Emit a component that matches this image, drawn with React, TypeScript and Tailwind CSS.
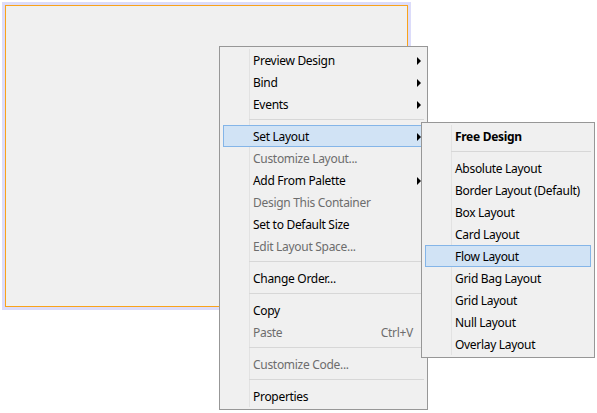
import React from 'react'

type Item =
  | { kind: 'sep' }
  | { kind: 'item'; label: string; disabled?: boolean; sub?: boolean; active?: boolean; bold?: boolean; shortcut?: string }

const mainItems: Item[] = [
  { kind: 'item', label: 'Preview Design', sub: true },
  { kind: 'item', label: 'Bind', sub: true },
  { kind: 'item', label: 'Events', sub: true },
  { kind: 'sep' },
  { kind: 'item', label: 'Set Layout', sub: true, active: true },
  { kind: 'item', label: 'Customize Layout...', disabled: true },
  { kind: 'item', label: 'Add From Palette', sub: true },
  { kind: 'item', label: 'Design This Container', disabled: true },
  { kind: 'item', label: 'Set to Default Size' },
  { kind: 'item', label: 'Edit Layout Space...', disabled: true },
  { kind: 'sep' },
  { kind: 'item', label: 'Change Order...' },
  { kind: 'sep' },
  { kind: 'item', label: 'Copy' },
  { kind: 'item', label: 'Paste', disabled: true, shortcut: 'Ctrl+V' },
  { kind: 'sep' },
  { kind: 'item', label: 'Customize Code...', disabled: true },
  { kind: 'sep' },
  { kind: 'item', label: 'Properties' },
]

const layoutItems: Item[] = [
  { kind: 'item', label: 'Free Design', bold: true },
  { kind: 'sep' },
  { kind: 'item', label: 'Absolute Layout' },
  { kind: 'item', label: 'Border Layout (Default)' },
  { kind: 'item', label: 'Box Layout' },
  { kind: 'item', label: 'Card Layout' },
  { kind: 'item', label: 'Flow Layout', active: true },
  { kind: 'item', label: 'Grid Bag Layout' },
  { kind: 'item', label: 'Grid Layout' },
  { kind: 'item', label: 'Null Layout' },
  { kind: 'item', label: 'Overlay Layout' },
]

function MenuRow({ item }: { item: Item }) {
  if (item.kind === 'sep') {
    return (
      <div className="relative h-[10px] pl-[29px] pr-[3px] pt-[4px]">
        <div className="h-px bg-[#d7d7d7]" />
      </div>
    )
  }
  return (
    <div
      className={`relative mx-[3px] flex h-[22px] items-center border pl-[29px] pr-[10px] pt-[2px] ${
        item.active ? 'border-[#84b5e8] bg-[#d1e3f5]' : 'border-transparent'
      } ${item.disabled ? 'text-[#6d6d6d]' : 'text-black'} ${item.bold ? 'font-bold' : ''}`}
    >
      <span className="flex-1 whitespace-nowrap">{item.label}</span>
      {item.shortcut && <span className="whitespace-nowrap">{item.shortcut}</span>}
      {item.sub && (
        <span className="absolute right-[2px] top-[7px] h-0 w-0 border-y-[4px] border-l-[4px] border-y-transparent border-l-black" />
      )}
    </div>
  )
}

function Menu({ items, className }: { items: Item[]; className: string }) {
  return (
    <div
      className={`absolute flex flex-col border border-[#979797] bg-[#f0f0f0] py-[2px] text-[12px] tracking-[-0.3px] ${className}`}
    >
      <div className="absolute bottom-[2px] left-[29px] top-[2px] w-px bg-[#e2e2e2]" />
      {items.map((item, i) => (
        <MenuRow key={i} item={item} />
      ))}
    </div>
  )
}

export default function App() {
  return (
    <div
      className="relative h-[413px] w-[597px] overflow-hidden bg-white pl-[2px] pt-[2px]"
      style={{ fontFamily: '"Noto Sans", "Open Sans", sans-serif' }}
    >
      <div className="h-[308px] w-[409px] border-[3px] border-[#dcdcfa]">
        <div className="h-full w-full border border-[#f9a31b] bg-[#f0f0f0]" />
      </div>
      <Menu items={mainItems} className="left-[219px] top-[46px] w-[209px]" />
      <Menu items={layoutItems} className="left-[421px] top-[122px] w-[174px]" />
    </div>
  )
}
